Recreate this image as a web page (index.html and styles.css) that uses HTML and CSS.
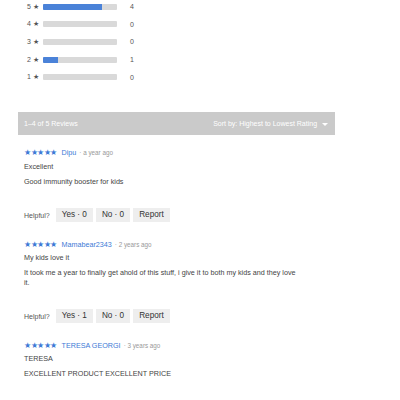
FILE: index.html
```html
<!DOCTYPE html>
<html>
<head>
<meta charset="utf-8">
<link rel="stylesheet" href="styles.css">
</head>
<body>
<div class="histogram">
  <div class="hrow"><span class="hlabel">5 ★</span><span class="bar"><span class="fill" style="width:80%"></span></span><span class="hcount">4</span></div>
  <div class="hrow"><span class="hlabel">4 ★</span><span class="bar"><span class="fill" style="width:0%"></span></span><span class="hcount">0</span></div>
  <div class="hrow"><span class="hlabel">3 ★</span><span class="bar"><span class="fill" style="width:0%"></span></span><span class="hcount">0</span></div>
  <div class="hrow"><span class="hlabel">2 ★</span><span class="bar"><span class="fill" style="width:20%"></span></span><span class="hcount">1</span></div>
  <div class="hrow"><span class="hlabel">1 ★</span><span class="bar"><span class="fill" style="width:0%"></span></span><span class="hcount">0</span></div>
</div>

<div class="toolbar">
  <span class="count">1–4 of 5 Reviews</span>
  <span class="sort">Sort by: Highest to Lowest Rating <span class="caret"></span></span>
</div>

<div class="review">
  <div class="meta"><span class="stars">★★★★★</span><span class="name">Dipu</span><span class="date">· a year ago</span></div>
  <div class="title">Excellent</div>
  <div class="body">Good immunity booster for kids</div>
  <div class="helpful"><span class="hl">Helpful?</span><span class="btn">Yes · 0</span><span class="btn">No · 0</span><span class="btn">Report</span></div>
</div>

<div class="review">
  <div class="meta"><span class="stars">★★★★★</span><span class="name">Mamabear2343</span><span class="date">· 2 years ago</span></div>
  <div class="title">My kids love it</div>
  <div class="body">It took me a year to finally get ahold of this stuff, i give it to both my kids and they love it.</div>
  <div class="helpful"><span class="hl">Helpful?</span><span class="btn">Yes · 1</span><span class="btn">No · 0</span><span class="btn">Report</span></div>
</div>

<div class="review">
  <div class="meta"><span class="stars">★★★★★</span><span class="name">TERESA GEORGI</span><span class="date">· 3 years ago</span></div>
  <div class="title">TERESA</div>
  <div class="body">EXCELLENT PRODUCT EXCELLENT PRICE</div>
</div>
</body>
</html>
```
FILE: styles.css
```css
html, body {
  margin: 0;
  padding: 0;
  background: #fff;
  font-family: "Liberation Sans", Arial, sans-serif;
  color: #444;
}

.histogram {
  margin-top: -2px;
  padding-left: 27px;
}

.hrow {
  display: flex;
  align-items: center;
  height: 17.6px;
}

.hlabel {
  width: 16px;
  font-size: 7px;
  color: #555;
}

.bar {
  display: block;
  width: 74px;
  height: 6px;
  background: #d9d9d9;
  border-radius: 1px;
  overflow: hidden;
}

.fill {
  display: block;
  height: 100%;
  background: #4a82d8;
}

.hcount {
  margin-left: 13px;
  font-size: 7px;
  color: #555;
}

.toolbar {
  margin: 26px 0 0 18px;
  width: 317px;
  height: 23px;
  background: #cacaca;
  display: flex;
  align-items: center;
  justify-content: space-between;
  padding: 0 7px 0 6px;
  box-sizing: border-box;
  color: #fff;
  font-size: 7px;
}

.caret {
  display: inline-block;
  width: 0;
  height: 0;
  border-left: 3px solid transparent;
  border-right: 3px solid transparent;
  border-top: 3px solid #fff;
  margin-left: 3px;
  vertical-align: middle;
}

.review {
  padding: 13px 24px 17px;
  width: 275px;
}

.review + .review {
  padding-top: 0;
}

.meta {
  display: flex;
  align-items: center;
  height: 10px;
}

.stars {
  color: #3d7ad6;
  font-size: 7.5px;
  letter-spacing: -0.5px;
}

.name {
  margin-left: 5px;
  color: #3d7ad6;
  font-size: 7.2px;
}

.date {
  margin-left: 3px;
  color: #999;
  font-size: 6.3px;
}

.title {
  margin-top: 4px;
  font-size: 7.2px;
  line-height: 10px;
}

.body {
  margin-top: 5px;
  font-size: 7.2px;
  line-height: 9.5px;
}

.helpful {
  margin-top: 22px;
  display: flex;
  align-items: center;
}

.hl {
  font-size: 7px;
  color: #555;
  margin-right: 6px;
}

.btn {
  display: inline-block;
  background: #eeeeee;
  color: #333;
  font-size: 8.2px;
  line-height: 14px;
  padding: 0 6px;
  margin-right: 3px;
}
```
